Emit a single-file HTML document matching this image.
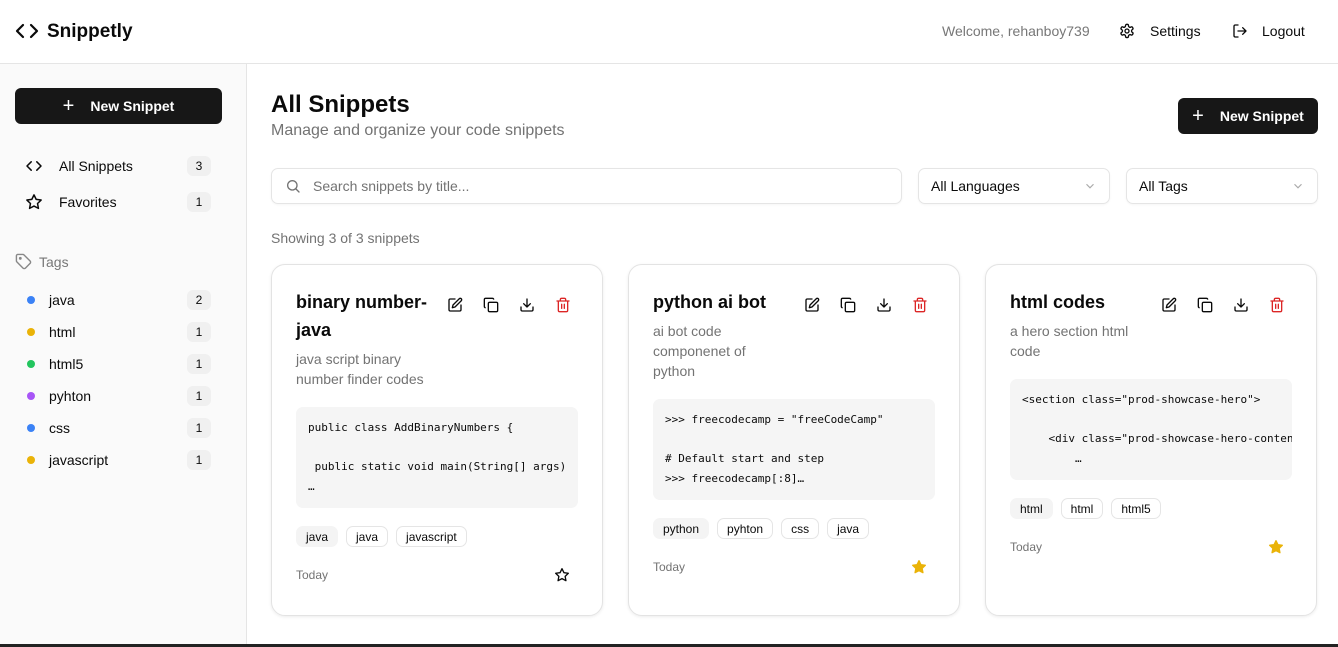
<!DOCTYPE html>
<html><head><meta charset="utf-8"><style>
*{box-sizing:border-box;margin:0;padding:0}
body{width:1338px;height:647px;overflow:hidden;background:#fff;font-family:"Liberation Sans",sans-serif;color:#0a0a0a;position:relative}
.abs{position:absolute}
svg{display:block}
.hdr{left:0;top:0;width:1338px;height:64px;border-bottom:1px solid #e5e5e5}
.side{left:0;top:64px;width:247px;height:583px;background:#fafafa;border-right:1px solid #e5e5e5}
.btn{background:#171717;color:#fff;border-radius:6px;font-size:14px;font-weight:bold;display:flex;align-items:center;justify-content:center}
.nav{left:25px;width:186px;height:24px;display:flex;align-items:center;font-size:14px}
.badge{position:absolute;right:0;top:2px;width:24px;height:20px;border-radius:6px;background:#f0f0f0;font-size:12px;display:flex;align-items:center;justify-content:center}
.dot{width:8px;height:8px;border-radius:50%;margin-left:2px;margin-right:14px}
.inp{border:1px solid #e5e5e5;border-radius:7px;height:36px;display:flex;align-items:center;font-size:14px;box-shadow:0 1px 2px rgba(0,0,0,.04)}
.card{top:264px;width:332px;height:352px;border:1px solid #e3e3e3;border-radius:14px;box-shadow:0 1px 3px rgba(0,0,0,.08);padding:23px 24px 0 24px}
.t{font-size:18px;font-weight:bold;line-height:28px;width:150px}
.d{font-size:14px;color:#737373;line-height:20px;width:150px;margin-top:5px}
.ic{position:absolute;top:32px;display:flex;gap:20px;left:175px}
.code{margin-top:18px;background:#f5f5f5;border-radius:7px;padding:11px 12px;font-family:"DejaVu Sans Mono","Liberation Mono",monospace;font-size:11px;line-height:19.5px;white-space:pre;overflow:hidden;height:101px}
.tags{display:flex;gap:8px;margin-top:18px}
.tag{height:21px;font-size:12px;padding:0 9px;border:1px solid #e5e5e5;border-radius:7px;display:flex;align-items:center}
.tag.f{background:#f4f4f4;border-color:#f4f4f4}
.foot{display:flex;justify-content:space-between;align-items:center;margin-top:20px;font-size:12px;color:#737373;padding-right:8px}
</style></head><body>
<div class="abs hdr">
 <svg class="abs" style="left:15px;top:21px" width="24" height="20" viewBox="0 0 24 20" fill="none" stroke="#0a0a0a" stroke-width="2.2" stroke-linecap="round" stroke-linejoin="round"><path d="M8 4 2 10l6 6M16 4l6 6-6 6"/></svg>
 <div class="abs" style="left:47px;top:21px;font-size:19px;font-weight:bold">Snippetly</div>
 <div class="abs" style="left:942px;top:23px;font-size:14px;color:#777">Welcome, rehanboy739</div>
 <svg class="abs" style="left:1119px;top:23px" width="16" height="16" viewBox="0 0 24 24" fill="none" stroke="#0a0a0a" stroke-width="2"><circle cx="12" cy="12" r="3"/><path d="M12.2 2h-.4a2 2 0 0 0-2 2v.2a2 2 0 0 1-1 1.7l-.4.3a2 2 0 0 1-2 0l-.2-.1a2 2 0 0 0-2.7.7l-.2.4a2 2 0 0 0 .7 2.7l.2.1a2 2 0 0 1 1 1.7v.5a2 2 0 0 1-1 1.7l-.2.1a2 2 0 0 0-.7 2.7l.2.4a2 2 0 0 0 2.7.7l.2-.1a2 2 0 0 1 2 0l.4.3a2 2 0 0 1 1 1.7v.2a2 2 0 0 0 2 2h.4a2 2 0 0 0 2-2v-.2a2 2 0 0 1 1-1.7l.4-.3a2 2 0 0 1 2 0l.2.1a2 2 0 0 0 2.7-.7l.2-.4a2 2 0 0 0-.7-2.7l-.2-.1a2 2 0 0 1-1-1.7v-.5a2 2 0 0 1 1-1.7l.2-.1a2 2 0 0 0 .7-2.7l-.2-.4a2 2 0 0 0-2.7-.7l-.2.1a2 2 0 0 1-2 0l-.4-.3a2 2 0 0 1-1-1.7V4a2 2 0 0 0-2-2z"/></svg>
 <div class="abs" style="left:1150px;top:23px;font-size:14px">Settings</div>
 <svg class="abs" style="left:1232px;top:23px" width="16" height="16" viewBox="0 0 24 24" fill="none" stroke="#0a0a0a" stroke-width="2" stroke-linecap="round" stroke-linejoin="round"><path d="M9 21H5a2 2 0 0 1-2-2V5a2 2 0 0 1 2-2h4M16 17l5-5-5-5M21 12H9"/></svg>
 <div class="abs" style="left:1262px;top:23px;font-size:14px">Logout</div>
</div>
<div class="abs side">
 <div class="abs btn" style="left:15px;top:24px;width:207px;height:36px"><span style="font-size:20px;font-weight:normal;margin-right:16px">+</span>New Snippet</div>
 <div class="abs nav" style="top:90px"><svg width="18" height="14" viewBox="0 0 24 20" fill="none" stroke="#0a0a0a" stroke-width="2.2" stroke-linecap="round" stroke-linejoin="round"><path d="M8 4 2 10l6 6M16 4l6 6-6 6"/></svg><span style="margin-left:16px">All Snippets</span><div class="badge">3</div></div>
 <div class="abs nav" style="top:126px"><svg width="18" height="18" viewBox="0 0 24 24" fill="none" stroke="#0a0a0a" stroke-width="2" stroke-linejoin="round"><path d="M12 2.5l2.9 6 6.6.9-4.8 4.6 1.2 6.5L12 17.4l-5.9 3.1 1.2-6.5L2.5 9.4l6.6-.9z"/></svg><span style="margin-left:16px">Favorites</span><div class="badge">1</div></div>
 <svg class="abs" style="left:15px;top:189px" width="17" height="17" viewBox="0 0 24 24" fill="none" stroke="#888" stroke-width="2" stroke-linejoin="round"><path d="M12.6 2.6A2 2 0 0 0 11.2 2H4a2 2 0 0 0-2 2v7.2a2 2 0 0 0 .6 1.4l8.7 8.7a2.4 2.4 0 0 0 3.4 0l6.6-6.6a2.4 2.4 0 0 0 0-3.4z"/><circle cx="7.5" cy="7.5" r="1" fill="#888"/></svg>
 <div class="abs" style="left:39px;top:190px;font-size:14px;color:#777">Tags</div>
 <div class="abs nav" style="top:224px"><span class="dot" style="background:#3b82f6"></span>java<div class="badge">2</div></div>
 <div class="abs nav" style="top:256px"><span class="dot" style="background:#eab308"></span>html<div class="badge">1</div></div>
 <div class="abs nav" style="top:288px"><span class="dot" style="background:#22c55e"></span>html5<div class="badge">1</div></div>
 <div class="abs nav" style="top:320px"><span class="dot" style="background:#a855f7"></span>pyhton<div class="badge">1</div></div>
 <div class="abs nav" style="top:352px"><span class="dot" style="background:#3b82f6"></span>css<div class="badge">1</div></div>
 <div class="abs nav" style="top:384px"><span class="dot" style="background:#eab308"></span>javascript<div class="badge">1</div></div>
</div>
<div class="abs" style="left:271px;top:91px;font-size:24px;font-weight:bold">All Snippets</div>
<div class="abs" style="left:271px;top:122px;font-size:16px;color:#737373">Manage and organize your code snippets</div>
<div class="abs btn" style="left:1178px;top:98px;width:140px;height:36px"><span style="font-size:20px;font-weight:normal;margin-right:16px">+</span>New Snippet</div>
<div class="abs inp" style="left:271px;top:168px;width:631px;padding-left:13px;color:#737373"><svg width="16" height="16" viewBox="0 0 24 24" fill="none" stroke="#737373" stroke-width="2" stroke-linecap="round"><circle cx="11" cy="11" r="7"/><path d="m21 21-4.3-4.3"/></svg><span style="margin-left:12px">Search snippets by title...</span></div>
<div class="abs inp" style="left:918px;top:168px;width:192px;padding:0 12px;justify-content:space-between">All Languages<svg width="14" height="14" viewBox="0 0 24 24" fill="none" stroke="#aaa" stroke-width="2"><path d="m6 9 6 6 6-6"/></svg></div>
<div class="abs inp" style="left:1126px;top:168px;width:192px;padding:0 12px;justify-content:space-between">All Tags<svg width="14" height="14" viewBox="0 0 24 24" fill="none" stroke="#aaa" stroke-width="2"><path d="m6 9 6 6 6-6"/></svg></div>
<div class="abs" style="left:271px;top:230px;font-size:14px;color:#737373">Showing 3 of 3 snippets</div>

<div class="abs card" style="left:271px">
 <div class="t">binary number-java</div>
 <div class="d">java script binary number finder codes</div>
 <div class="ic"></div>
 <div class="code">public class AddBinaryNumbers {

 public static void main(String[] args)
…</div>
 <div class="tags"><div class="tag f">java</div><div class="tag">java</div><div class="tag">javascript</div></div>
 <div class="foot"><span>Today</span><svg width="16" height="16" viewBox="0 0 24 24" fill="none" stroke="#0a0a0a" stroke-width="2" stroke-linejoin="round"><path d="M12 2.5l2.9 6 6.6.9-4.8 4.6 1.2 6.5L12 17.4l-5.9 3.1 1.2-6.5L2.5 9.4l6.6-.9z"/></svg></div>
</div>
<div class="abs card" style="left:628px">
 <div class="t">python ai bot</div>
 <div class="d" style="width:110px">ai bot code componenet of python</div>
 <div class="ic"></div>
 <div class="code">&gt;&gt;&gt; freecodecamp = "freeCodeCamp"

# Default start and step
&gt;&gt;&gt; freecodecamp[:8]…</div>
 <div class="tags"><div class="tag f">python</div><div class="tag">pyhton</div><div class="tag">css</div><div class="tag">java</div></div>
 <div class="foot"><span>Today</span><svg width="16" height="16" viewBox="0 0 24 24" fill="#eab308" stroke="#eab308" stroke-width="2" stroke-linejoin="round"><path d="M12 2.5l2.9 6 6.6.9-4.8 4.6 1.2 6.5L12 17.4l-5.9 3.1 1.2-6.5L2.5 9.4l6.6-.9z"/></svg></div>
</div>
<div class="abs card" style="left:985px">
 <div class="t">html codes</div>
 <div class="d" style="width:135px">a hero section html code</div>
 <div class="ic"></div>
 <div class="code">&lt;section class="prod-showcase-hero"&gt;

    &lt;div class="prod-showcase-hero-content"&gt;
        …</div>
 <div class="tags"><div class="tag f">html</div><div class="tag">html</div><div class="tag">html5</div></div>
 <div class="foot"><span>Today</span><svg width="16" height="16" viewBox="0 0 24 24" fill="#eab308" stroke="#eab308" stroke-width="2" stroke-linejoin="round"><path d="M12 2.5l2.9 6 6.6.9-4.8 4.6 1.2 6.5L12 17.4l-5.9 3.1 1.2-6.5L2.5 9.4l6.6-.9z"/></svg></div>
</div>
<div class="abs" style="left:0;top:644px;width:1338px;height:3px;background:#222"></div>
<script>
var ic='<svg width="16" height="16" viewBox="0 0 24 24" fill="none" stroke="#0a0a0a" stroke-width="2" stroke-linecap="round" stroke-linejoin="round"><path d="M12 3H5a2 2 0 0 0-2 2v14a2 2 0 0 0 2 2h14a2 2 0 0 0 2-2v-7"/><path d="M18.4 2.6a2.1 2.1 0 1 1 3 3L12 15l-4 1 1-4z"/></svg>'+
'<svg width="16" height="16" viewBox="0 0 24 24" fill="none" stroke="#0a0a0a" stroke-width="2" stroke-linejoin="round"><rect x="8" y="8" width="14" height="14" rx="2"/><path d="M4 16c-1.1 0-2-.9-2-2V4c0-1.1.9-2 2-2h10c1.1 0 2 .9 2 2"/></svg>'+
'<svg width="16" height="16" viewBox="0 0 24 24" fill="none" stroke="#0a0a0a" stroke-width="2" stroke-linecap="round" stroke-linejoin="round"><path d="M21 15v4a2 2 0 0 1-2 2H5a2 2 0 0 1-2-2v-4M7 10l5 5 5-5M12 15V3"/></svg>'+
'<svg width="16" height="16" viewBox="0 0 24 24" fill="none" stroke="#dc2626" stroke-width="2" stroke-linecap="round" stroke-linejoin="round"><path d="M3 6h18M19 6v14a2 2 0 0 1-2 2H7a2 2 0 0 1-2-2V6M8 6V4a2 2 0 0 1 2-2h4a2 2 0 0 1 2 2v2M10 11v6M14 11v6"/></svg>';
document.querySelectorAll('.ic').forEach(function(e){e.innerHTML=ic});
</script>
</body></html>
